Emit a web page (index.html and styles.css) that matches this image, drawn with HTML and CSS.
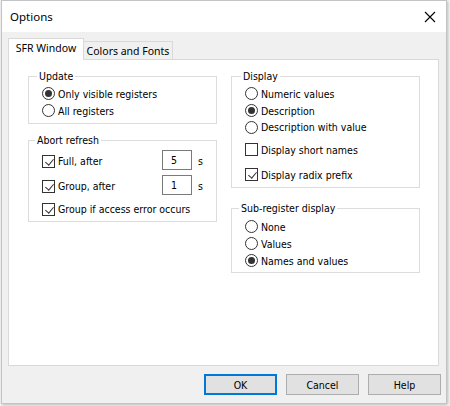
FILE: index.html
```html
<!DOCTYPE html>
<html>
<head>
<meta charset="utf-8">
<link rel="stylesheet" href="styles.css">
</head>
<body>
<div class="window">
  <div class="titlebar">
    <span class="title">Options</span>
    <svg class="close" width="12" height="12" viewBox="0 0 12 12"><path d="M1 1 L11 11 M11 1 L1 11" stroke="#000" stroke-width="1.1" fill="none"/></svg>
  </div>
  <div class="body">
    <div class="tabs">
      <div class="tab active">SFR Window</div>
      <div class="tab">Colors and Fonts</div>
    </div>
    <div class="panel">
      <div class="col">
        <fieldset class="group g-update">
          <legend class="lg-update">Update</legend>
          <div class="row"><span class="radio on"></span>Only visible registers</div>
          <div class="row"><span class="radio"></span>All registers</div>
        </fieldset>
        <fieldset class="group g-abort">
          <legend class="lg-abort">Abort refresh</legend>
          <div class="row crow">
            <span class="clabel"><span class="check on"></span>Full, after</span>
            <span class="edit">5</span><span class="unit">s</span>
          </div>
          <div class="row crow second">
            <span class="clabel"><span class="check on"></span>Group, after</span>
            <span class="edit">1</span><span class="unit">s</span>
          </div>
          <div class="row crow last"><span class="check on"></span>Group if access error occurs</div>
        </fieldset>
      </div>
      <div class="col">
        <fieldset class="group g-display">
          <legend class="lg-display">Display</legend>
          <div class="row"><span class="radio"></span>Numeric values</div>
          <div class="row"><span class="radio on"></span>Description</div>
          <div class="row short"><span class="radio"></span>Description with value</div>
          <div class="row brow first"><span class="check"></span>Display short names</div>
          <div class="row brow"><span class="check on"></span>Display radix prefix</div>
        </fieldset>
        <fieldset class="group g-sub">
          <legend class="lg-sub">Sub-register display</legend>
          <div class="row"><span class="radio"></span>None</div>
          <div class="row"><span class="radio"></span>Values</div>
          <div class="row"><span class="radio on"></span>Names and values</div>
        </fieldset>
      </div>
    </div>
    <div class="buttons">
      <div class="btn default">OK</div>
      <div class="btn">Cancel</div>
      <div class="btn">Help</div>
    </div>
  </div>
</div>
</body>
</html>
```
FILE: styles.css
```css
html, body {
  margin: 0;
  padding: 0;
}
body {
  width: 450px;
  height: 406px;
  background: #f6f6f6;
  font-family: "DejaVu Sans Condensed", "DejaVu Sans", Tahoma, sans-serif;
  font-stretch: condensed;
  font-size: 10.5px;
  color: #000;
  overflow: hidden;
}
.window {
  margin-left: 1px;
  width: 444px;
  height: 402px;
  border: 1px solid #c4c4c4;
  background: #f0f0f0;
  box-shadow: 1px 1px 3px rgba(0,0,0,0.25);
  display: flex;
  flex-direction: column;
}
.titlebar {
  height: 31px;
  background: #fff;
  display: flex;
  align-items: center;
  justify-content: space-between;
  padding: 0 9px 0 8px;
  flex: none;
}
.title {
  font-family: "Noto Sans", "Open Sans", sans-serif;
  font-stretch: normal;
  font-size: 11.5px;
  padding-bottom: 1px;
}
.close {
  display: block;
  margin-right: 1px;
}
.body {
  flex: 1;
  display: flex;
  flex-direction: column;
  padding: 6px 7px 0 6px;
}
.tabs {
  display: flex;
  align-items: flex-end;
  height: 21px;
  position: relative;
  z-index: 1;
  font-family: "Noto Sans", "Open Sans", sans-serif;
  font-stretch: normal;
  font-size: 10.5px;
  white-space: nowrap;
}
.tab {
  box-sizing: border-box;
  border: 1px solid #d9d9d9;
  border-bottom: none;
  background: #f0f0f0;
  height: 18px;
  padding: 0;
  line-height: 18px;
  width: 90px;
  text-align: center;
  margin-left: -1px;
}
.tab.active {
  background: #fff;
  height: 22px;
  margin-bottom: -1px;
  width: 76px;
  margin-left: 0;
  line-height: 19px;
  text-align: center;
}
.panel {
  box-sizing: border-box;
  height: 307px;
  background: #fff;
  border: 1px solid #d9d9d9;
  display: flex;
  gap: 14px;
  padding: 0 0 0 19px;
}
.col {
  width: 189px;
  display: flex;
  flex-direction: column;
}
.group {
  margin: 0;
  padding: 0 0 0 13px;
  border: 1px solid #dcdcdc;
  min-width: 0;
}
.group legend {
  padding: 0 2px;
  line-height: 14px;
}
.lg-update { margin-left: -5px; }
.lg-abort { margin-left: -7px; }
.lg-display { margin-left: -4px; }
.lg-sub { margin-left: -6px; }
.g-update {
  margin-top: 9px;
  padding-top: 2px;
  padding-bottom: 4px;
}
.g-abort {
  margin-top: 9px;
  padding-top: 3px;
  padding-bottom: 2px;
}
.g-display {
  margin-top: 9px;
  padding-top: 2px;
  padding-bottom: 0;
}
.g-sub {
  margin-top: 13px;
  padding-top: 3px;
  padding-bottom: 3px;
}
.row {
  height: 17px;
  display: flex;
  align-items: center;
  white-space: nowrap;
}
.row.short {
  height: 16px;
}
.crow {
  height: 22px;
  margin-bottom: 3px;
}
.crow.second {
  margin-bottom: 2px;
}
.crow.last {
  height: 20px;
  margin-bottom: 0;
}
.brow {
  height: 25px;
}
.brow.first {
  margin-top: 2px;
}
.clabel {
  width: 120px;
  display: flex;
  align-items: center;
}
.radio {
  box-sizing: border-box;
  width: 13px;
  height: 13px;
  border: 1px solid #333;
  border-radius: 50%;
  margin-right: 3px;
  flex: none;
  display: flex;
  align-items: center;
  justify-content: center;
}
.radio.on::after {
  content: "";
  width: 7px;
  height: 7px;
  border-radius: 50%;
  background: #333;
}
.check {
  box-sizing: border-box;
  width: 13px;
  height: 13px;
  border: 1px solid #333;
  margin-right: 3px;
  flex: none;
  position: relative;
}
.check.on::after {
  content: "";
  position: absolute;
  width: 4px;
  height: 7px;
  border-right: 1px solid #333;
  border-bottom: 1px solid #333;
  transform: rotate(40deg);
  transform-origin: center;
  left: 3.5px;
  top: 1px;
}
.edit {
  box-sizing: border-box;
  width: 30px;
  height: 20px;
  border: 1px solid #7a7a7a;
  padding-left: 8px;
  line-height: 18px;
  align-self: flex-start;
}
.unit {
  margin-left: 6px;
}
.buttons {
  display: flex;
  justify-content: flex-end;
  gap: 9px;
  padding-top: 8px;
  margin-right: -2px;
}
.btn {
  box-sizing: border-box;
  width: 73px;
  height: 21px;
  background: #e1e1e1;
  border: 1px solid #adadad;
  display: flex;
  align-items: center;
  justify-content: center;
}
.btn.default {
  border: 2px solid #0078d7;
}
```
